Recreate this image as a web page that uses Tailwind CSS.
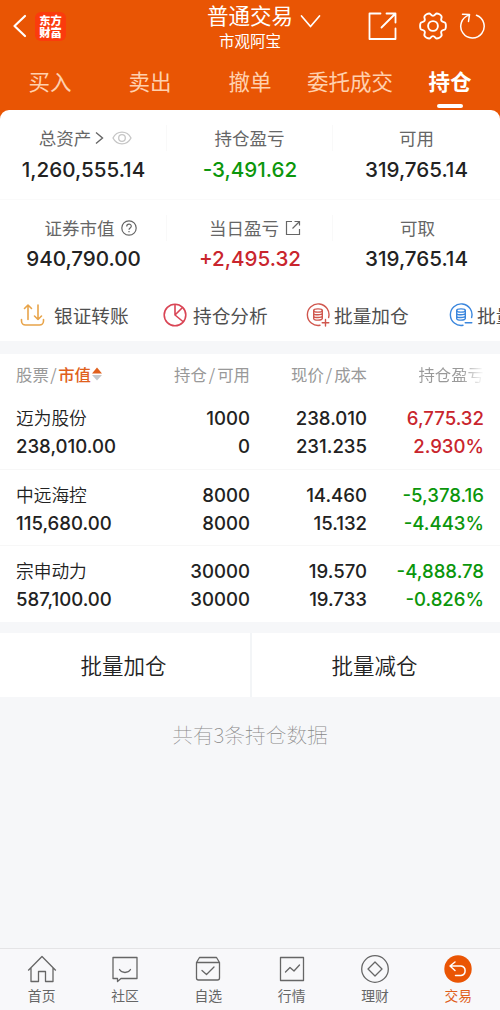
<!DOCTYPE html>
<html lang="zh">
<head>
    <meta charset="UTF-8">
    <meta name="viewport" content="width=device-width, initial-scale=1.0">
    <title>普通交易 - 持仓</title>
    <script src="https://cdn.jsdelivr.net/npm/@tailwindcss/browser@4"></script>
    <style>
        body { font-family: 'Inter', 'Noto Sans CJK SC', sans-serif; }
        .cjk { font-family: 'Noto Sans CJK SC', sans-serif; }
    </style>
</head>
<body class="bg-[#e95504]">
<div class="w-[500px] h-[1010px] flex flex-col overflow-hidden text-[#222]">

    <!-- 顶部标题 -->
    <header class="h-[110px] shrink-0 text-white cjk">
        <div class="h-[52px] flex items-center justify-between">
            <div class="w-[180px] flex items-center pl-[12px] gap-[8px]">
                <svg class="w-[15px] h-[24px]" viewBox="0 0 15 24" fill="none" stroke="#fff" stroke-width="2.2" stroke-linecap="round" stroke-linejoin="round"><path d="M13 2 2.500 12 13 22"/></svg>
                <div class="w-[31px] h-[29px] rounded-[6px] bg-[#fb3b0d] flex flex-col items-center justify-center text-[11.300px] leading-[12.500px] font-black">
                    <span>东方</span><span>财富</span>
                </div>
            </div>
            <div class="relative w-[140px] flex flex-col items-center">
                <h1 class="text-[21.500px] leading-[28px]">普通交易</h1>
                <p class="text-[15.500px] leading-[22px]">市观阿宝</p>
                <svg class="absolute left-[120px] top-[13px] w-[21px] h-[15px]" viewBox="0 0 21 15" fill="none" stroke="#fff" stroke-width="1.700" stroke-linecap="round" stroke-linejoin="round"><path d="M1.500 2 10.500 12.500 19.500 2"/></svg>
            </div>
            <div class="w-[180px] flex items-center justify-end pr-[15px]">
                <svg class="w-[30px] h-[30px] mr-[20px] -ml-[3px]" viewBox="0 0 30 30" fill="none" stroke="#fff" stroke-width="1.800" stroke-linecap="round" stroke-linejoin="round"><path d="M11.500 2.500h-11v25.500h26V17.500M17.500 2.500h9v9M26.500 2.500 12.500 16.500" transform="translate(1 0)"/></svg>
                <svg class="w-[30px] h-[30px] mr-[11px]" viewBox="0 0 30 30" fill="none" stroke="#fff" stroke-width="1.900" stroke-linejoin="round"><path d="M11.300 2.500c1.200 0 1.700 2.400 3.700 2.400s2.500-2.400 3.700-2.400c1.600 0 4.200 1.500 4.900 2.900.6 1.100-1.200 2.700-.2 4.400 1 1.700 3.300 1 3.900 2.100.8 1.400.8 4.800 0 6.200-.6 1.100-2.900.4-3.900 2.100-1 1.700.8 3.300.2 4.400-.7 1.400-3.300 2.900-4.900 2.900-1.200 0-1.700-2.400-3.700-2.400s-2.500 2.400-3.700 2.400c-1.600 0-4.200-1.500-4.900-2.900-.6-1.100 1.200-2.700.2-4.400-1-1.700-3.300-1-3.900-2.100-.8-1.400-.8-4.800 0-6.200.6-1.100 2.900-.4 3.900-2.100 1-1.700-.8-3.300-.2-4.400.7-1.400 3.300-2.900 4.900-2.900z"/><circle cx="15" cy="15" r="4.900"/></svg>
                <svg class="w-[26px] h-[28px]" viewBox="0 0 26 28" fill="none" stroke="#fff" stroke-width="1.500" stroke-linecap="round" stroke-linejoin="round"><path d="M17.500 3.300A11.700 11.700 0 1 1 10 3.100M3.500 2.300 10.500 2.600 9.500 9.500"/></svg>
            </div>
        </div>
        <nav class="h-[58px] grid grid-cols-5 text-center text-[21.500px] leading-[58px] text-[#ffd0ae]">
            <span>买入</span>
            <span>卖出</span>
            <span>撤单</span>
            <span class="whitespace-nowrap">委托成交</span>
            <span class="relative font-bold text-white">持仓<i class="absolute left-[37px] top-[52px] w-[26px] h-[4px] rounded-full bg-white"></i></span>
        </nav>
    </header>

    <!-- 资产 -->
    <section class="h-[231px] shrink-0 bg-white rounded-t-[9px] overflow-hidden flex flex-col">
        <div class="h-[90px] pt-[15px] border-b border-[#fafafa] grid grid-cols-[167px_166px_167px] text-center">
            <div>
                <div class="cjk h-[26px] border-r border-[#f9f9f9] flex items-center justify-center text-[17.500px] text-[#666] pl-[5px]">总资产
                    <svg class="w-[9px] h-[14px] ml-[4px]" viewBox="0 0 9 14" fill="none" stroke="#666" stroke-width="1.400"><path d="M1 1.500 7.500 7 1 12.500"/></svg>
                    <svg class="w-[20px] h-[14px] ml-[8px]" viewBox="0 0 20 14" fill="none" stroke="#c6c6c6" stroke-width="1.300"><path d="M1 7C5-.8 15-.8 19 7 15 14.800 5 14.800 1 7z"/><circle cx="10" cy="7" r="3.300"/></svg>
                </div>
                <div class="text-[20.600px] leading-[38px] font-[550]">1,260,555.14</div>
            </div>
            <div>
                <div class="cjk h-[26px] border-r border-[#f9f9f9] leading-[26px] text-[17.500px] text-[#666]">持仓盈亏</div>
                <div class="text-[20.600px] leading-[38px] font-[550] text-[#0b960b]">-3,491.62</div>
            </div>
            <div>
                <div class="cjk h-[26px] leading-[26px] text-[17.500px] text-[#666]">可用</div>
                <div class="text-[20.600px] leading-[38px] font-[550]">319,765.14</div>
            </div>
        </div>
        <div class="h-[90px] pt-[15px] grid grid-cols-[167px_166px_167px] text-center">
            <div>
                <div class="cjk h-[26px] border-r border-[#f9f9f9] flex items-center justify-center text-[17.500px] text-[#666] pl-[15px]">证券市值
                    <svg class="w-[16px] h-[16px] ml-[6px]" viewBox="0 0 16 16" fill="none" stroke="#666" stroke-width="1.200"><circle cx="8" cy="8" r="7.200"/><path d="M5.700 6.500C5.700 3.300 10.300 3.300 10.300 6.300 10.300 8 8 8 8 9.800M8 11v1.300"/></svg>
                </div>
                <div class="text-[20.600px] leading-[36px] font-[550]">940,790.00</div>
            </div>
            <div>
                <div class="cjk h-[26px] border-r border-[#f9f9f9] flex items-center justify-center text-[17.500px] text-[#666] pl-[11px]">当日盈亏
                    <svg class="w-[16px] h-[16px] ml-[6px]" viewBox="0 0 16 16" fill="none" stroke="#666" stroke-width="1.200"><path d="M7 1.500H1.500v13h13V9M9.500 1.500h5v4M14.500 1.500 7.500 8.500"/></svg>
                </div>
                <div class="text-[20.600px] leading-[36px] font-[550] text-[#c9252d]">+2,495.32</div>
            </div>
            <div>
                <div class="cjk h-[26px] leading-[26px] text-[17.500px] text-[#666] pl-[2px]">可取</div>
                <div class="text-[20.600px] leading-[36px] font-[550]">319,765.14</div>
            </div>
        </div>
        <div class="cjk h-[51px] flex items-center pl-[20px] text-[18.700px] text-[#4f4f4f] whitespace-nowrap">
            <div class="w-[143px] shrink-0 flex items-center gap-[9px]">
                <svg class="w-[25px] h-[24px]" viewBox="0 0 25 24" fill="none" stroke="#e8a44a" stroke-width="1.600" stroke-linecap="round" stroke-linejoin="round"><path d="M1.500 16.500v1.500a4 4 0 0 0 4 4h14a4 4 0 0 0 4-4v-1.500M8 16.500V2M4.500 5.500 8 2l3.500 3.500M18 2v14.500M14.500 13l3.500 3.500 3.500-3.500"/></svg>
                <span>银证转账</span>
            </div>
            <div class="w-[143px] shrink-0 flex items-center gap-[6px]">
                <svg class="w-[24px] h-[24px]" viewBox="0 0 24 24" fill="none" stroke="#d94555" stroke-width="1.600" stroke-linejoin="round"><circle cx="12" cy="12" r="10.800"/><path d="M12 1.500V12l8.500 7M12 12l7.500-7.500"/></svg>
                <span>持仓分析</span>
            </div>
            <div class="w-[143px] shrink-0 flex items-center gap-[3px]">
                <svg class="w-[25px] h-[24px]" viewBox="0 0 25 24" fill="none" stroke="#d0574e" stroke-width="1.400" stroke-linecap="round"><path d="M14 22.300A10.800 10.800 0 1 1 22.600 14.500M19.500 16.500v6.500M16.200 19.800h6.600"/><ellipse cx="12" cy="7.500" rx="4.300" ry="1.600"/><path d="M7.700 7.500v8c0 2.200 8.600 2.200 8.600 0v-8M7.700 10.200c0 2.100 8.600 2.100 8.600 0M7.700 12.900c0 2.100 8.600 2.100 8.600 0"/></svg>
                <span>批量加仓</span>
            </div>
            <div class="w-[143px] shrink-0 flex items-center gap-[3px]">
                <svg class="w-[25px] h-[24px]" viewBox="0 0 25 24" fill="none" stroke="#3a86dd" stroke-width="1.400" stroke-linecap="round"><path d="M14 22.300A10.800 10.800 0 1 1 22.600 14.500M16.200 19.800h6.600"/><ellipse cx="12" cy="7.500" rx="4.300" ry="1.600"/><path d="M7.700 7.500v8c0 2.200 8.600 2.200 8.600 0v-8M7.700 10.200c0 2.100 8.600 2.100 8.600 0M7.700 12.900c0 2.100 8.600 2.100 8.600 0"/></svg>
                <span>批量</span>
            </div>
        </div>
    </section>

    <!-- 持仓列表 -->
    <main class="flex-1 bg-[#f6f7f9] pt-[13px]">
        <div class="bg-white h-[268px] text-[18.600px] font-[550]">
            <div class="cjk h-[39px] pt-px px-[16px] grid grid-cols-[120px_114px_117px_117px] items-center text-right text-[16.400px] font-normal text-[#999]">
                <div class="flex items-center text-left whitespace-nowrap">股票<span class="mx-[1.500px]">/</span><span class="text-[#e0601c] font-medium">市值</span>
                    <svg class="w-[10px] h-[14px] ml-px" viewBox="0 0 10 14"><path d="M0 6.500 5 .5l5 6z" fill="#e0601c"/><path d="M0 8h10l-5 5.500z" fill="#c4c8cc"/></svg>
                </div>
                <div>持仓<span class="mx-[2px]">/</span>可用</div>
                <div>现价<span class="mx-[2px]">/</span>成本</div>
                <div class="text-transparent bg-clip-text bg-linear-to-r from-[#999] from-80% to-white to-100%">持仓盈亏</div>
            </div>
            <div class="h-[77px] px-[16px] pt-[11px] grid grid-cols-[120px_114px_117px_117px] auto-rows-[28px] leading-[28px] text-right border-b border-[#f7f7f7]">
                <span class="cjk text-left text-[17.700px] leading-[26px] font-[350]">迈为股份</span><span>1000</span><span>238.010</span><span class="text-[#c9252d]">6,775.32</span>
                <span class="text-left">238,010.00</span><span>0</span><span>231.235</span><span class="text-[#c9252d]">2.930%</span>
            </div>
            <div class="h-[76px] px-[16px] pt-[11px] grid grid-cols-[120px_114px_117px_117px] auto-rows-[28px] leading-[28px] text-right border-b border-[#f7f7f7]">
                <span class="cjk text-left text-[17.700px] leading-[26px] font-[350]">中远海控</span><span>8000</span><span>14.460</span><span class="text-[#0b960b]">-5,378.16</span>
                <span class="text-left">115,680.00</span><span>8000</span><span>15.132</span><span class="text-[#0b960b]">-4.443%</span>
            </div>
            <div class="h-[76px] px-[16px] pt-[11px] grid grid-cols-[120px_114px_117px_117px] auto-rows-[28px] leading-[28px] text-right">
                <span class="cjk text-left text-[17.700px] leading-[26px] font-[350]">宗申动力</span><span>30000</span><span>19.570</span><span class="text-[#0b960b]">-4,888.78</span>
                <span class="text-left">587,100.00</span><span>30000</span><span>19.733</span><span class="text-[#0b960b]">-0.826%</span>
            </div>
        </div>
        <div class="cjk mt-[11px] h-[64px] bg-white grid grid-cols-2 text-center text-[21.500px] leading-[64px] font-[350]">
            <span class="pr-[3px]">批量加仓</span>
            <span class="pr-[3px] border-l-2 border-[#f3f5f7]">批量减仓</span>
        </div>
        <p class="cjk mt-[21px] text-center text-[20.700px] leading-[32px] font-thin text-[#888]">共有3条持仓数据</p>
    </main>

    <!-- 底部导航 -->
    <footer class="cjk h-[62px] shrink-0 bg-[#f8f8fa] border-t border-[#e4e4e6] grid grid-cols-6 text-center text-[13.800px] leading-[20px] text-[#666]">
        <div class="flex flex-col items-center pt-[6px]">
            <svg class="w-[30px] h-[28px]" viewBox="0 0 30 28" fill="none" stroke="#666" stroke-width="1.300" stroke-linejoin="round"><path d="M1.200 15.500 15 1.500l13.800 14M4 12.500v14h7.500v-10h7v10H26v-14"/></svg>
            <span class="mt-[2px]">首页</span>
        </div>
        <div class="flex flex-col items-center pt-[6px]">
            <svg class="w-[30px] h-[28px]" viewBox="0 0 30 28" fill="none" stroke="#666" stroke-width="1.300" stroke-linejoin="round" stroke-linecap="round"><path d="M3 2.500h24v21H11L7.500 26.500v-3H3zM9.500 14.500c2.500 4 8.500 4 11 0"/></svg>
            <span class="mt-[2px]">社区</span>
        </div>
        <div class="flex flex-col items-center pt-[6px]">
            <svg class="w-[30px] h-[28px]" viewBox="0 0 30 28" fill="none" stroke="#666" stroke-width="1.300" stroke-linejoin="round" stroke-linecap="round"><path d="M3.500 7.500 6.500 2.500h17l3 5v15.500a2 2 0 0 1-2 2h-19a2 2 0 0 1-2-2zM3.500 7.500h23M9 15.500l4.500 4L21 12"/></svg>
            <span class="mt-[2px]">自选</span>
        </div>
        <div class="flex flex-col items-center pt-[6px]">
            <svg class="w-[30px] h-[28px]" viewBox="0 0 30 28" fill="none" stroke="#666" stroke-width="1.300" stroke-linejoin="round" stroke-linecap="round"><path d="M3.500 2.500h23v23h-23zM8.500 17l4.500-4.500 4 3.500 5.500-6"/></svg>
            <span class="mt-[2px]">行情</span>
        </div>
        <div class="flex flex-col items-center pt-[6px]">
            <svg class="w-[30px] h-[28px]" viewBox="0 0 30 28" fill="none" stroke="#666" stroke-width="1.300" stroke-linejoin="round"><circle cx="15" cy="14" r="13.300"/><path d="m15 7 7 7-7 7-7-7z"/></svg>
            <span class="mt-[2px]">理财</span>
        </div>
        <div class="flex flex-col items-center pt-[6px] text-[#e0601c]">
            <svg class="w-[30px] h-[28px]" viewBox="0 0 30 28" fill="none" stroke="#fff" stroke-width="1.500" stroke-linejoin="round" stroke-linecap="round"><circle cx="15" cy="14" r="13.700" fill="#ea5504" stroke="none"/><path d="M12 7 7 11l5 4.500M7 11h11a4.800 4.800 0 0 1 0 9.500h-5.500"/></svg>
            <span class="mt-[2px]">交易</span>
        </div>
    </footer>
</div>
</body>
</html>
